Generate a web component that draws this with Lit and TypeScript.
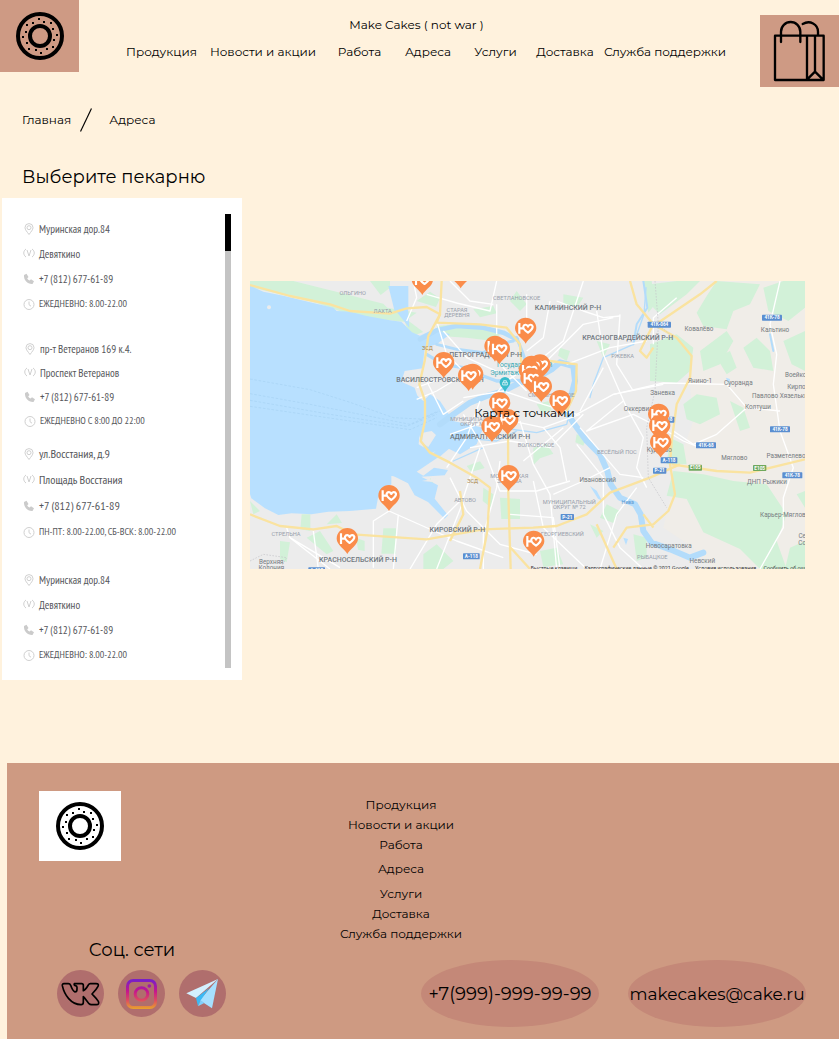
import { LitElement, html, svg, css } from "lit";
import { customElement } from "lit/decorators.js";

const MENU = ["Продукция", "Новости и акции", "Работа", "Адреса", "Услуги", "Доставка", "Служба поддержки"];

interface Bakery {
  address: string;
  metro: string;
  phone: string;
  hours: string;
  density: string;
}

const BAKERIES: Bakery[] = [
  { address: "Муринская дор.84", metro: "Девяткино", phone: "+7 (812) 677-61-89", hours: "ЕЖЕДНЕВНО: 8.00-22.00", density: "normal" },
  { address: "пр-т Ветеранов 169 к.4.", metro: "Проспект Ветеранов", phone: "+7 (812) 677-61-89", hours: "ЕЖЕДНЕВНО С 8:00 ДО 22:00", density: "tight" },
  { address: "ул.Восстания, д.9", metro: "Площадь Восстания", phone: "+7 (812) 677-61-89", hours: "ПН-ПТ: 8.00-22.00, СБ-ВСК: 8.00-22.00", density: "loose" },
  { address: "Муринская дор.84", metro: "Девяткино", phone: "+7 (812) 677-61-89", hours: "ЕЖЕДНЕВНО: 8.00-22.00", density: "normal" },
];

// Tips of the map pins, in map units.
const PINS: [number, number][] = [
  [517, 42], [632, 22], [827, 188], [581, 291], [735, 242], [748, 250], [668, 326], [656, 330],
  [870, 298], [845, 302], [838, 314], [843, 338], [874, 363], [930, 405], [749, 412], [773, 462],
  [726, 483], [776, 630], [851, 827], [1226, 446], [1229, 480], [1232, 530], [417, 690], [292, 819],
];

// x, y, text, style
const LABELS: [number, number, string, string][] = [
  [308, 42, "ОЛЬГИНО", "area"], [398, 96, "ЛАХТА", "area"], [800, 56, "СВЕТЛАНОВСКОЕ", "area"],
  [621, 93, "СТАРАЯ", "area"], [621, 108, "ДЕРЕВНЯ", "area"], [954, 86, "КАЛИНИНСКИЙ Р-Н", "district"],
  [1133, 176, "КРАСНОГВАРДЕЙСКИЙ Р-Н", "district"], [1118, 231, "РЖЕВКА", "area"],
  [707, 228, "ПЕТРОГРАДСКИЙ Р-Н", "district"], [570, 302, "ВАСИЛЕОСТРОВСКИЙ Р-Н", "district"],
  [824, 259, "Государственный", "museum"], [764, 281, "Эрмитаж", "museum"],
  [904, 348, "СМОЛЬНИНСКОЕ", "area"], [680, 419, "МУНИЦИПАЛЬНЫЙ", "area"], [668, 435, "ОКРУГ №", "area"],
  [720, 474, "АДМИРАЛТЕЙСКИЙ Р-Н", "district"], [858, 499, "ВОЛКОВСКОЕ", "area"],
  [1101, 520, "ВЕСЁЛЫЙ ПОС", "area"], [778, 591, "МОСКОВСКАЯ", "area"], [778, 607, "ЗАСТАВА", "area"],
  [1043, 602, "Ивановский", "town"], [645, 662, "АВТОВО", "area"], [958, 668, "МУНИЦИПАЛЬНЫЙ", "area"],
  [958, 684, "ОКРУГ № 72", "area"], [622, 752, "КИРОВСКИЙ Р-Н", "district"],
  [937, 766, "ГЕОРГИЕВСКИЙ", "area"], [324, 842, "КРАСНОСЕЛЬСКИЙ Р-Н", "district"],
  [108, 764, "СТРЕЛЬНА", "area"], [64, 848, "Верхняя", "town"], [64, 868, "Колония", "town"],
  [1347, 150, "Ковалёво", "town"], [1575, 152, "Кальтино", "town"], [1350, 307, "Янино-1", "town"],
  [1465, 313, "Суоранда", "town"], [1238, 341, "Заневка", "town"], [1170, 391, "Оккервиль", "town"],
  [1524, 383, "Колтуши", "town"], [1590, 351, "Павлово Хязельки", "town"], [1648, 288, "Воейково", "town"],
  [1655, 324, "Кирполье", "town"], [1228, 514, "Кудрово", "town"], [1453, 537, "Мяглово", "town"],
  [1608, 530, "Разметелево", "town"], [1551, 610, "ДНП Рыжики", "town"], [1604, 707, "Карьер-Мяглово", "town"],
  [1256, 800, "Новосаратовка", "town"], [1207, 834, "РЫБАЦКОЕ", "area"], [1357, 845, "Невский", "town"],
  [1662, 772, "Сер", "town"], [1662, 792, "Сол", "town"], [1133, 670, "Нева", "river"], [668, 606, "ЗСД", "highway"],
  [532, 208, "ЗСД", "highway"], [912, 868, "Быстрые клавиши", "credit"], [1160, 868, "Картографические данные © 2021 Google", "credit"],
  [1427, 868, "Условия использования", "credit"], [1620, 868, "Сообщить об ошибке", "credit"],
];

// x, y, text, colour class of the road badges
const SHIELDS: [number, number, string, string][] = [
  [1228, 131, "41К-064", "blue"], [1566, 110, "41К-78", "blue"], [1590, 445, "41К-78", "blue"],
  [1368, 493, "41К-68", "blue"], [1627, 583, "41К-78", "blue"], [1257, 538, "А-118", "blue"],
  [1229, 569, "Р-21", "blue"], [952, 708, "Р-21", "blue"], [664, 826, "А-118", "blue"],
  [200, 868, "А-118", "blue"], [1336, 560, "Е105", "green"], [1529, 561, "Е105", "green"],
  [1248, 416, "А-118", "blue"],
];

const donut = () => html`
  <svg class="donut" viewBox="0 0 48 48" aria-hidden="true">
    <g fill="none" stroke="#000" stroke-width="4">
      <circle cx="24" cy="24" r="22"></circle>
      <circle cx="24" cy="24" r="10"></circle>
    </g>
    <path fill="#000" d="M22 6h2v2h-2zM27 9h2v2h-2zM34 10h2v2h-2zM36 16h2v2h-2zM40 22h2v2h-2zM37 27h2v2h-2zM36 34h2v2h-2zM30 36h2v2h-2zM24 40h2v2h-2zM19 37h2v2h-2zM12 36h2v2h-2zM10 30h2v2h-2zM6 24h2v2h-2zM9 19h2v2h-2zM10 12h2v2h-2zM16 10h2v2h-2z"></path>
  </svg>`;

const rowIcons = {
  pin: svg`<path d="M6 11.5C4 8.700 2 6.800 2 4.600a4 4 0 0 1 8 0C10 6.800 8 8.700 6 11.500z"/><circle cx="6" cy="4.700" r="2"/>`,
  metro: svg`<path d="M3 9C0 7 0 3 3 1M9 1c3 2 3 6 0 8M4 2l2 6 2-6"/>`,
  phone: svg`<path class="solid" d="M1 2 3.500.8 5.500 4 4.200 5.400c.5 1 1.300 1.800 2.400 2.200L8 6.300 11 8.300 9.500 11C4.500 11.300.5 7 1 2z"/>`,
  clock: svg`<circle cx="6" cy="6.500" r="5"/><path d="M6 3.500v3.200l2 1.500"/>`,
};

@customElement("bakery-map")
export class BakeryMap extends LitElement {
  static styles = css`
    :host { display: block; position: relative; }
    .canvas { display: block; width: 100%; height: auto; }
    .caption {
      position: absolute; inset: 0 6px 24px 0; display: flex; align-items: center; justify-content: center;
      margin: 0; font-size: 12px; line-height: 20px; color: #000;
    }
    text { font-family: Roboto, sans-serif; text-anchor: middle; fill: #767b80; }
    .district { font-size: 21px; font-weight: 500; fill: #707880; }
    .area { font-size: 17px; fill: #98a0ab; }
    .town { font-size: 19px; }
    .museum { font-size: 20px; fill: #3aa9b4; }
    .river { font-size: 16px; fill: #5c97cf; }
    .highway { font-size: 16px; fill: #a98445; }
    .credit { font-size: 16px; fill: #333; }
    .shield { font-size: 14px; font-weight: 700; fill: #fff; }
    .blue { fill: #5a8ed0; }
    .green { fill: #6fa85c; }
    .water { fill: #b8e0ff; }
    .park { fill: #d2f1d8; }
    .land { fill: #f0ede8; }
    .river-line { fill: none; stroke: #b3dcfb; stroke-linejoin: round; stroke-linecap: round; }
    .street { fill: none; stroke: #fff; stroke-width: 4; stroke-linejoin: round; }
    .main { fill: none; stroke: #fae3a0; stroke-width: 7; stroke-linejoin: round; }
    .ferry { fill: none; stroke: #a6d2f3; stroke-width: 2; stroke-dasharray: 8 5; }
    .border { fill: none; stroke: #c4c4c8; stroke-width: 2; stroke-dasharray: 5 4; }
  `;

  render() {
    return html`
      <svg class="canvas" viewBox="0 0 1665 864" role="img" aria-label="Карта с точками">
        <rect width="1665" height="864" fill="#ececec"></rect>
        <path class="land" d="M1300 0H1665V864H1390L1330 800 1240 740 1280 560 1330 420 1310 200 1240 120z"></path>
        <g class="park">
          <path d="M0 0H130L250 30 400 68 412 80 500 95 462 122 320 108 200 66 0 18z"></path>
          <path d="M360 0h60v20l-28 22zM460 108l60 45-40 15zM500 60l40-28 30 20-12 26z"></path>
          <path d="M1180 0l25 0 10 70-20 25zM1200 10l80-10h70l-40 40-80 60-20-20zM1400 0l130 10-30 60-50 20-20 55-70-10-20-40 30-50zM1200 190l80-30 50 40-10 70-40 35-80-5zM1350 210l80-60 20 30-40 70-50 20z"></path>
          <path d="M1540 20l60-20h65v80l-50 40-60-30zM1600 180l65-30v120l-40-20zM1480 200l40-30 40 40 10 60-60-10zM1300 370l40-30 60 10 10 50-60 30-40-15zM1260 470l40 20 10 60h-60zM1270 570l90 10 90 20 100 10 60 90-30 80 30 84h-80l-60-60-110-50-50-100-60-10z"></path>
          <path d="M1400 230l40-20 20 50-30 20zM1440 360l40 20 20 60-30 10zM1640 640l25-10v50zM1620 800l45-20v84h-60z"></path>
          <path d="M560 135l60-5 70 12 60 18-20 20-80-10-80-5zM670 85l60-10 10 22-50 12zM800 30l30 40-20 20-30-30zM860 370l35-10 10 28-30 8zM850 500l40-10 20 28-40 14-20 20z"></path>
          <path d="M750 650l60 4v60h-56zM700 620l30 20-6 40-26-20zM1070 670l40 20-20 36-40-16zM870 810l50-10 20 50-60 8zM1020 730l40 20-20 20zM1150 760l40 10 0 60-30 10zM820 120l30 20-10 40zM940 40l60 10-20 30-40-10zM1040 180l40 10-20 40z"></path>
          <path d="M155 700h26v50l-30-5zM170 770l40-20 40 60-20 10zM230 730l30-30 16 26zM400 742h38v76h-44zM318 770l26 10v30l-20-4zM90 780l30 4-10 60-20-10zM0 660l30 30-20 10zM520 820l40-30 50 50-30 24h-60z"></path>
          <path d="M540 590l10 15-12 14zM650 555l40-14 14 20-40 12zM980 460l30 10-10 24-24-10zM930 200l30 10-10 30-26-16z"></path>
        </g>
        <path class="water" d="M0 14 40 32 100 44 190 66 250 80 260 90 300 92 350 105 420 118 454 122 486 154 510 164 540 150 560 148 600 160 560 190 524 200 518 262 464 270 454 302 494 320 506 356 516 400 510 440 506 490 560 522 500 560 470 588 424 585 424 610 384 650 378 683 300 690 235 692 184 700 125 697 85 702 45 682 4 652 0 640z"></path>
        <circle cx="57" cy="79" r="6" fill="#ececec"></circle>
        <g class="water">
          <path d="M415 15h60v70l-40 10zM470 20l8 120-40-50zM450 300l70 60 20-20 30 20 40 60 90 20-20 50-50 30-40-20-60 20-20-50z"></path>
          <path d="M430 585l80-40 80-60 14 12-70 60 60 10-10 16-70 4 50 26-10 40 40 50-10 10-50-50-40-20-20-36zM455 490l20 0 20 60-40 20z"></path>
          <path d="M1020 615l20 14 16 30-12-6zM1120 770l14 4-6 18zM1428 290l12 4-4 18z"></path>
        </g>
        <path fill="#ececec" d="M518 455 545 450 558 462 535 498 516 486zM500 572 570 525 584 536 520 584zM515 600 570 590 560 604z"></path>
        <g class="river-line">
          <path stroke-width="14" d="M510 175 560 148 620 135 700 140 760 155 800 175"></path>
          <path stroke-width="10" d="M530 220 580 250 640 260 700 285 740 300 790 298 850 300"></path>
          <path stroke-width="9" d="M560 190 620 205 700 215 740 190 790 180M800 170 820 220 828 250"></path>
          <path stroke-width="18" d="M570 430 610 400 660 365 710 345 760 330 810 305 870 285 905 265 930 244 970 255 975 300 962 350 945 385 970 425 1010 480 1050 520 1072 570 1082 610 1110 650 1155 670 1172 700 1180 750 1205 785 1260 805 1320 830 1360 815"></path>
          <path stroke-width="4" d="M720 370 750 440 860 455 950 430 960 390M630 470 740 480 800 450M1188 20 1182 100 1150 190 1060 230 1030 310 1020 350M610 540 700 500"></path>
          <path stroke-width="6" d="M1180 0 1192 80 1160 130 1150 190M1560 160 1570 210"></path>
        </g>
        <path class="ferry" d="M0 294 180 326 300 364 430 410 510 414 565 390M0 338 180 370 480 430 570 390M0 358 240 400 470 436 560 400M0 376 300 420 480 446 560 410"></path>
        <g class="street">
          <path d="M530 40 620 66 720 90 740 0M490 0 500 50 470 120M600 0 660 60 730 70M560 120 590 220 650 280M580 150 650 230 760 280M710 185 760 260 830 330"></path>
          <path d="M500 355 560 330 660 270M530 300 580 400 640 360M640 350 760 330 880 370 980 400 1090 340 1240 306 1430 310 1490 380M720 360 770 300 830 260 900 300"></path>
          <path d="M600 460 740 410 880 440 990 400M660 500 780 480 900 500 1000 400M690 360 650 470 590 560M810 420 850 550 900 640 920 864M640 400 700 500 750 630 860 630 960 600"></path>
          <path d="M740 70 740 160M830 40 830 180M900 60 880 170 830 210M920 60 1000 90 1060 110 1110 105M1000 0 970 90 940 180 840 260M890 240 1000 130 1090 110M1040 90 1060 220 1130 380 1180 470 1160 560 1190 620"></path>
          <path d="M950 250 1080 200 1190 180M1060 260 990 390M1110 100 1100 250 1150 330M1090 340 1240 310M1120 360 1010 450 1150 400 1250 450 1300 480 1350 500M990 440 1110 580 1180 590M980 490 1060 590 1060 700 1110 800 1180 864"></path>
          <path d="M1490 380 1400 460 1330 490 1270 450M1590 0 1560 130 1580 220 1570 310 1590 450 1630 560 1600 650 1600 740 1530 864M1490 380 1590 390M1210 190 1210 110 1280 50"></path>
          <path d="M417 690 370 720V860M417 690 620 780 760 830M445 700 430 864M270 860 120 770 110 740M120 770 240 864M480 864 560 730 640 650 690 500M600 590 650 690 750 790 860 820M640 660 560 864M190 750 205 864M500 320 580 290"></path>
          <path d="M750 540 740 620 700 760 700 864M820 540 940 440M780 700 910 710 930 864M910 640 1000 600 1080 560M850 600 880 740 1010 864M950 600 930 500 880 440M1160 620 1100 700 1050 864"></path>
        </g>
        <g class="main">
          <path d="M0 12 120 45 240 70 300 90 420 98 470 82 530 78 570 100 560 125 690 130 770 140 810 190 815 260 850 300"></path>
          <path d="M575 0 570 100 535 165 524 240 508 310 525 360 525 420 512 480 540 515 600 545 680 590 720 620 712 750 690 864"></path>
          <path d="M0 700 90 735 190 745 260 735 310 760 530 775 700 745 850 740 920 735 1010 700 1080 635 1200 590 1290 550"></path>
          <path d="M774 440 775 640 782 864M782 800 840 864M900 240 980 250 978 330 950 390"></path>
          <path d="M1140 0 1160 70 1210 130 1280 170 1325 225 1320 290 1280 370 1265 480 1260 550 1275 640 1255 690 1210 730 1130 740 1090 800M1220 128 1350 40 1400 0M1210 130 1170 210 1190 230 1210 200M1265 550 1400 570 1500 575 1665 535M1040 730 1100 864M1210 740 1180 700M630 630 640 700 600 780"></path>
        </g>
        <path class="border" d="M1215 0 1225 130 1270 170M1225 130 1215 330 1190 440 1195 590 1250 680M0 840 40 820 110 830 90 864"></path>
        ${LABELS.map(([x, y, t, k]) => svg`<text class=${k} x=${x} y=${y}>${t}</text>`)}
        ${SHIELDS.map(([x, y, t, k]) => svg`
          <rect class=${k} x=${x - t.length * 5} y=${y - 9} width=${t.length * 10} height="18" rx="2"></rect>
          <text class="shield" x=${x} y=${y + 5}>${t}</text>`)}
        <g transform="translate(765 306)">
          <path fill="#38bccb" d="M0 28C-5 14-16 10-16-2a16 16 0 0 1 32 0C16 10 5 14 0 28z"></path>
          <path fill="none" stroke="#fff" stroke-width="2" d="M-7-2H7V6H-7zM-4-2V-7H4V-2M0 0V5"></path>
        </g>
        ${PINS.map(([x, y]) => svg`
          <g transform="translate(${x} ${y})">
            <path fill="#fa8c4a" d="M0 0C-7-15-32-27-32-46a32 32 0 0 1 64 0C32-27 7-15 0 0z"/>
            <path fill="none" stroke="#fff" stroke-width="6.500" stroke-linejoin="round" d="M-19-62V-30M-19-46H-8M7-33C-2-39-9-45-7-52C-4-59 4-58 7-51C10-58 18-59 21-52C22-45 15-39 7-33z"/>
          </g>`)}
      </svg>
      <p class="caption">Карта с точками</p>`;
  }
}

@customElement("app-root")
export class AppRoot extends LitElement {
  static styles = css`
    :host {
      display: flex; flex-direction: column; min-height: 100vh; background: #fff2dd; color: #000;
      font-family: Montserrat, Inter, sans-serif; font-size: 12px; line-height: 20px;
    }
    * { box-sizing: border-box; }
    a { color: inherit; text-decoration: none; white-space: nowrap; }
    h1, h2, p, ul { margin: 0; padding: 0; font-weight: 400; list-style: none; }
    .header { display: flex; align-items: flex-start; }
    .tile { display: flex; align-items: center; justify-content: center; width: 79px; height: 72px; background: #ce9a84; }
    .donut { display: block; width: 48px; height: 48px; }
    .cart { margin-top: 15px; padding: 0; border: 0; cursor: pointer; }
    .cart-icon { width: 79px; height: 72px; }
    .top { flex: 1; min-width: 0; padding: 15px 28px 0 40px; }
    .slogan { text-align: center; padding-right: 18px; }
    .menu {
      display: grid; margin-top: 7px; text-align: center;
      grid-template-columns: 85fr 118fr 75fr 62fr 73fr 66fr 134fr;
    }
    .menu-item { display: flex; justify-content: center; min-width: 0; }
    .crumbs { display: flex; align-items: center; padding: 21px 22px 0; }
    .slash { width: 12px; height: 24px; margin: 0 17px 0 9px; }
    .title { padding: 33px 22px 0; font-size: 18px; line-height: 24px; }
    .content { display: flex; align-items: flex-start; gap: 8px; padding: 9px 34px 0 2px; }
    .panel { display: flex; flex: 0 0 240px; justify-content: space-between; padding: 16px 11px 12px 21px; background: #fff; }
    .bakeries { display: flex; flex-direction: column; padding-bottom: 1px; font-family: "PT Sans Narrow", "Liberation Sans Narrow", "Roboto Condensed", "Open Sans", sans-serif; color: #55565a; }
    .row { display: flex; align-items: center; gap: 4px; height: 25px; font-size: 11px; white-space: nowrap; }
    .bakery { padding-top: 2px; }
    .bakery.tight { padding: 21px 0 0 1px; }
    .bakery.tight .row { height: 24px; }
    .bakery.loose { padding: 8px 0 20px; }
    .bakery.loose .row { height: 26px; font-size: 12px; }
    .bakery .row.hours { font-size: 10px; }
    .row-icon { width: 12px; height: 12px; fill: none; stroke: #d0d0d0; }
    .solid { fill: #cbcbcb; stroke: none; }
    .track { width: 6px; background: #c4c4c4; }
    .thumb { height: 37px; background: #000; }
    .map { flex: 1; min-width: 0; margin-top: 83px; }
    .footer {
      display: flex; flex: 1; margin: 83px 0 0 7px; padding: 28px 33px 12px 32px; background: #ce9a82;
    }
    .footer-side { display: flex; flex-direction: column; justify-content: space-between; width: 287px; padding-bottom: 10px; }
    .footer-main { display: flex; flex: 1; flex-direction: column; justify-content: space-between; }
    .footer-logo { display: flex; align-items: center; justify-content: center; width: 82px; height: 70px; background: #fff; }
    .footer-menu { display: flex; flex-direction: column; align-items: center; width: 150px; padding-top: 4px; }
    .spaced { padding: 4px 0 5px; }
    .social { padding-left: 18px; }
    .social-title { width: 150px; text-align: center; font-size: 18px; line-height: 24px; }
    .social-list { display: flex; gap: 14px; margin-top: 8px; }
    .social-icon { display: block; width: 47px; height: 47px; }
    .contacts { display: flex; justify-content: flex-end; gap: 29px; }
    .contact {
      display: flex; align-items: center; justify-content: center; width: 178px; height: 67px;
      border-radius: 50%; background: #c48878; font-size: 18px; line-height: 24px;
    }
    .contact.mail { font-size: 17px; }
  `;

  private renderRow(kind: keyof typeof rowIcons, content: unknown) {
    return html`<p class="row ${kind === "clock" ? "hours" : ""}">
      <svg class="row-icon" viewBox="0 0 12 12" aria-hidden="true">${rowIcons[kind]}</svg>${content}
    </p>`;
  }

  render() {
    return html`
      <header class="header">
        <a class="tile" href="#" aria-label="Главная">${donut()}</a>
        <div class="top">
          <p class="slogan">Make Cakes ( not war )</p>
          <nav class="menu">${MENU.map((m) => html`<a class="menu-item" href="#">${m}</a>`)}</nav>
        </div>
        <button class="tile cart" type="button" aria-label="Корзина">
          <svg class="cart-icon" viewBox="0 0 237 216" fill="none" stroke="#000" stroke-width="7" stroke-linejoin="round" stroke-linecap="round">
            <path d="M45 62H191V195H45zM141 62V195M165 62V170M141 194 165 170 189 194M63 81V50a28.500 28.500 0 0 1 58 0V81M128 27C150 14 174 28 174 50V62"></path>
          </svg>
        </button>
      </header>
      <nav class="crumbs">
        <a href="#">Главная</a>
        <svg class="slash" viewBox="0 0 12 24" aria-hidden="true"><path d="M0.500 23.500 11.500 0.500" stroke="#000" stroke-width="1.200"></path></svg>
        <a href="#">Адреса</a>
      </nav>
      <h1 class="title">Выберите пекарню</h1>
      <main class="content">
        <section class="panel">
          <ul class="bakeries">
            ${BAKERIES.map((b) => html`<li class="bakery ${b.density}">
              ${this.renderRow("pin", b.address)}
              ${this.renderRow("metro", b.metro)}
              ${this.renderRow("phone", html`<a href="tel:+78126776189">${b.phone}</a>`)}
              ${this.renderRow("clock", b.hours)}
            </li>`)}
          </ul>
          <div class="track"><div class="thumb"></div></div>
        </section>
        <bakery-map class="map"></bakery-map>
      </main>
      <footer class="footer">
        <div class="footer-side">
          <a class="footer-logo" href="#" aria-label="Главная">${donut()}</a>
          <section class="social">
            <h2 class="social-title">Соц. сети</h2>
            <div class="social-list">
              <a href="#" aria-label="ВКонтакте">
                <svg class="social-icon" viewBox="0 0 141 141">
                  <circle cx="70.500" cy="70.500" r="70.500" fill="#b06e6d"></circle>
                  <path fill="none" stroke="#000" stroke-width="5" stroke-linejoin="round" d="M16 47Q15 41 21 41H34Q39 41 41 46C44 55 49 64 54 66Q60 66 60 58V52Q60 48 55 47Q50 45 52 41H74Q79 41 79 46V62C84 60 90 52 94 45Q96 41 100 41H117Q127 41 123 49C118 59 108 69 105 72C109 77 118 84 124 94Q128 104 118 104H103Q99 104 96 101C91 95 85 86 79 80V97Q79 104 72 104C42 104 22 75 16 47z"></path>
                </svg>
              </a>
              <a href="#" aria-label="Instagram">
                <svg class="social-icon" viewBox="0 0 141 141">
                  <defs><linearGradient id="insta" gradientUnits="userSpaceOnUse" x1="0" y1="27" x2="0" y2="117">
                    <stop offset="0.050" stop-color="#7a1fc6"></stop><stop offset="0.400" stop-color="#c4168f"></stop>
                    <stop offset="0.700" stop-color="#dc4a62"></stop><stop offset="1" stop-color="#e8a32c"></stop>
                  </linearGradient></defs>
                  <circle cx="70.500" cy="70.500" r="70.500" fill="#b06e6d"></circle>
                  <g fill="none" stroke="url(#insta)" stroke-width="9">
                    <rect x="28.500" y="31.500" width="84" height="81" rx="17"></rect><circle cx="70.500" cy="72" r="19"></circle>
                  </g>
                  <circle cx="94" cy="48" r="5.500" fill="#a01ba8"></circle>
                </svg>
              </a>
              <a href="#" aria-label="Telegram">
                <svg class="social-icon" viewBox="0 0 141 141">
                  <circle cx="70.500" cy="70.500" r="70.500" fill="#b06e6d"></circle>
                  <path fill="#d3f0ff" d="M22 70 117 27 51 84z"></path>
                  <path fill="#a6e0ff" d="M117 27 99 115 62 91z"></path>
                  <path fill="#3bb9f5" d="M51 84 91 54 65 91 57 109z"></path>
                  <path fill="#7fd0fb" d="M65 91 76 99 57 109z"></path>
                </svg>
              </a>
            </div>
          </section>
        </div>
        <div class="footer-main">
          <nav class="footer-menu">
            ${MENU.map((m) => html`<a class=${m === "Адреса" ? "spaced" : ""} href="#">${m}</a>`)}
          </nav>
          <div class="contacts">
            <a class="contact" href="tel:+79999999999">+7(999)-999-99-99</a>
            <a class="contact mail" href="mailto:makecakes@cake.ru">makecakes@cake.ru</a>
          </div>
        </div>
      </footer>`;
  }
}
